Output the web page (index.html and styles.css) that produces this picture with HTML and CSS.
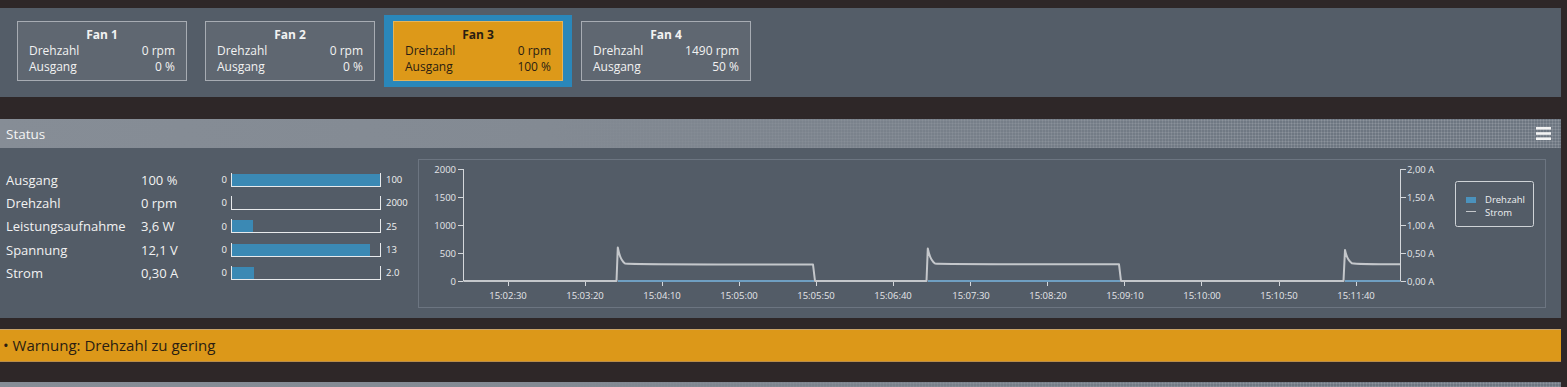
FILE: index.html
```html
<!DOCTYPE html>
<html lang="de">
<head>
    <meta charset="UTF-8">
    <title>Lüftersteuerung</title>
    <link rel="stylesheet" href="styles.css">
</head>
<body>
    <!-- Fan selection -->
    <div class="fan-bar">
        <div class="fan-card">
            <div class="fan-title">Fan 1</div>
            <div class="fan-row"><span>Drehzahl</span><span>0 rpm</span></div>
            <div class="fan-row"><span>Ausgang</span><span>0 %</span></div>
        </div>
        <div class="fan-card">
            <div class="fan-title">Fan 2</div>
            <div class="fan-row"><span>Drehzahl</span><span>0 rpm</span></div>
            <div class="fan-row"><span>Ausgang</span><span>0 %</span></div>
        </div>
        <div class="fan-card selected warn">
            <div class="fan-title">Fan 3</div>
            <div class="fan-row"><span>Drehzahl</span><span>0 rpm</span></div>
            <div class="fan-row"><span>Ausgang</span><span>100 %</span></div>
        </div>
        <div class="fan-card">
            <div class="fan-title">Fan 4</div>
            <div class="fan-row"><span>Drehzahl</span><span>1490 rpm</span></div>
            <div class="fan-row"><span>Ausgang</span><span>50 %</span></div>
        </div>
    </div>

    <!-- Status panel -->
    <div class="panel-head">
        <span>Status</span>
        <svg class="menu-icon" width="15" height="13" viewBox="0 0 15 13">
            <rect x="0" y="0" width="15" height="2.6" fill="#f4f4f4"/>
            <rect x="0" y="5.2" width="15" height="2.6" fill="#f4f4f4"/>
            <rect x="0" y="10.4" width="15" height="2.6" fill="#f4f4f4"/>
        </svg>
    </div>
    <div class="status-body">
        <div class="stats">
            <div class="stat-row">
                <span class="stat-label">Ausgang</span>
                <span class="stat-value">100 %</span>
                <span class="bar-min">0</span>
                <div class="bar"><div class="bar-fill" style="width: 100%"></div></div>
                <span class="bar-max">100</span>
            </div>
            <div class="stat-row">
                <span class="stat-label">Drehzahl</span>
                <span class="stat-value">0 rpm</span>
                <span class="bar-min">0</span>
                <div class="bar"><div class="bar-fill" style="width: 0%"></div></div>
                <span class="bar-max">2000</span>
            </div>
            <div class="stat-row">
                <span class="stat-label">Leistungsaufnahme</span>
                <span class="stat-value">3,6 W</span>
                <span class="bar-min">0</span>
                <div class="bar"><div class="bar-fill" style="width: 14.4%"></div></div>
                <span class="bar-max">25</span>
            </div>
            <div class="stat-row">
                <span class="stat-label">Spannung</span>
                <span class="stat-value">12,1 V</span>
                <span class="bar-min">0</span>
                <div class="bar"><div class="bar-fill" style="width: 93%"></div></div>
                <span class="bar-max">13</span>
            </div>
            <div class="stat-row">
                <span class="stat-label">Strom</span>
                <span class="stat-value">0,30 A</span>
                <span class="bar-min">0</span>
                <div class="bar"><div class="bar-fill" style="width: 15%"></div></div>
                <span class="bar-max">2.0</span>
            </div>
        </div>

        <div class="chart">
            <svg width="1126" height="147" viewBox="0 0 1126 147">
                <!-- axes -->
                <g stroke="#d4d7db" stroke-width="1" fill="none">
                    <path d="M44.5 9 V121.5"/>
                    <path d="M981.5 9 V121.5"/>
                    <path d="M39 9.5 H44 M39 37.5 H44 M39 65.5 H44 M39 93.5 H44 M39 121.5 H44"/>
                    <path d="M982 9.5 H987 M982 37.5 H987 M982 65.5 H987 M982 93.5 H987 M982 121.5 H987"/>
                    <path d="M89.5 121 V126 M166.5 121 V126 M243.5 121 V126 M320.5 121 V126 M397.5 121 V126 M474.5 121 V126 M551.5 121 V126 M628.5 121 V126 M705.5 121 V126 M782.5 121 V126 M860.5 121 V126 M937.5 121 V126"/>
                </g>
                <g class="axis-text" text-anchor="end">
                    <text x="37" y="12.5">2000</text>
                    <text x="37" y="40.5">1500</text>
                    <text x="37" y="68.5">1000</text>
                    <text x="37" y="96.5">500</text>
                    <text x="37" y="124.5">0</text>
                </g>
                <g class="axis-text">
                    <text x="988" y="12.5">2,00 A</text>
                    <text x="988" y="40.5">1,50 A</text>
                    <text x="988" y="68.5">1,00 A</text>
                    <text x="988" y="96.5">0,50 A</text>
                    <text x="988" y="124.5">0,00 A</text>
                </g>
                <g class="axis-text" text-anchor="middle">
                    <text x="89" y="138.5">15:02:30</text>
                    <text x="166" y="138.5">15:03:20</text>
                    <text x="243" y="138.5">15:04:10</text>
                    <text x="320" y="138.5">15:05:00</text>
                    <text x="397" y="138.5">15:05:50</text>
                    <text x="474" y="138.5">15:06:40</text>
                    <text x="552" y="138.5">15:07:30</text>
                    <text x="629" y="138.5">15:08:20</text>
                    <text x="706" y="138.5">15:09:10</text>
                    <text x="783" y="138.5">15:10:00</text>
                    <text x="860" y="138.5">15:10:50</text>
                    <text x="937" y="138.5">15:11:40</text>
                </g>
                <!-- Drehzahl series (only while the fan runs) -->
                <path d="M199 121 H395 M509 121 H701 M926 121 H981" stroke="#6f9fc2" stroke-width="2" fill="none"/>
                <!-- Strom series -->
                <path d="M45 121 H197.5 L198.8 87.5 Q201 100 206 103.5 Q210 104.5 394 104.5 L396 121 H507.5 L508.8 88.5 Q511 100 516 103.5 Q520 104.3 700 104.3 L702 121 H924.5 L926 90 Q928 100 933 103.3 Q937 104.3 981 104.3"
                      stroke="#c4c7cb" stroke-width="2" fill="none" stroke-linejoin="round"/>
                <!-- legend -->
                <rect x="1036.5" y="21.5" width="78" height="45" rx="2" fill="none" stroke="#cfd3d7"/>
                <rect x="1047" y="37" width="10" height="6" fill="#4b92bd"/>
                <path d="M1047 51.5 H1057" stroke="#c4c7cb" stroke-width="1"/>
                <g class="legend-text">
                    <text x="1066" y="42.5">Drehzahl</text>
                    <text x="1066" y="55.5">Strom</text>
                </g>
            </svg>
        </div>
    </div>

    <div class="warning">• Warnung: Drehzahl zu gering</div>

    <div class="panel-head bottom-head"></div>
</body>
</html>
```

FILE: styles.css
```css
/* Page base */
body, html {
    margin: 0;
    padding: 0;
}

body {
    background-color: #2e2728;
    font-family: "Open Sans", "Noto Sans", sans-serif;
    color: #f2f2f2;
    padding-top: 8px;
    overflow: hidden;
}

/* Fan selection bar */
.fan-bar {
    width: 1561px;
    height: 89px;
    box-sizing: border-box;
    background-color: #545d68;
    display: flex;
    gap: 18px;
    padding: 13px 17px 0 17px;
}

.fan-card {
    width: 170px;
    height: 60px;
    box-sizing: border-box;
    border: 1px solid #a7acb3;
    background-color: #5f6771;
    padding: 5px 11px 0 11px;
    font-size: 12px;
    line-height: 16px;
}

.fan-title {
    text-align: center;
    font-weight: bold;
}

.fan-row {
    display: flex;
    justify-content: space-between;
}

.fan-card.warn {
    background-color: #dd9919;
    border-color: #e6b458;
    color: #2a1d12;
}

.fan-card.selected {
    box-shadow: 0 0 0 6px #2a87ba, 3px 0 0 6px #2a87ba, -3px 0 0 6px #2a87ba;
}

/* Panel header strip */
.panel-head {
    width: 1561px;
    height: 29px;
    box-sizing: border-box;
    margin-top: 22px;
    padding: 0 10px 0 6px;
    display: flex;
    justify-content: space-between;
    align-items: center;
    font-size: 13.5px;
    color: #f4f4f4;
    background-color: #6d7681;
    background-image:
        linear-gradient(to right, #868d96 0%, #838a93 35%, rgba(128, 135, 145, 0) 85%),
        radial-gradient(circle, #8c939c 0.9px, transparent 1.1px);
    background-size: auto, 3px 3px;
}

.bottom-head {
    margin-top: 20px;
}

/* Status body */
.status-body {
    width: 1561px;
    height: 170px;
    box-sizing: border-box;
    background-color: #535c67;
    display: flex;
    padding-left: 6px;
}

.stats {
    width: 412px;
    padding-top: 20px;
}

.stat-row {
    display: flex;
    align-items: center;
    height: 23.3px;
}

.stat-label {
    width: 135px;
    font-size: 13px;
}

.stat-value {
    width: 80px;
    font-size: 13px;
}

.bar-min {
    width: 10px;
    box-sizing: border-box;
    padding-right: 4px;
    text-align: right;
    font-size: 9.5px;
}

.bar {
    width: 150px;
    height: 14px;
    box-sizing: border-box;
    border: 1px solid #e8eaec;
    border-top: none;
    padding-top: 1px;
}

.bar-fill {
    height: 12px;
    background-color: #3b89b4;
}

.bar-max {
    margin-left: 5px;
    font-size: 9.5px;
}

/* Chart */
.chart {
    width: 1128px;
    height: 149px;
    box-sizing: border-box;
    margin-top: 11px;
    border: 1px solid #6c7581;
}

.chart svg {
    display: block;
}

.axis-text {
    font-family: "Open Sans", sans-serif;
    font-size: 9.5px;
    fill: #e4e6e9;
}

.legend-text {
    font-family: "Open Sans", sans-serif;
    font-size: 9.5px;
    fill: #eef0f2;
}

/* Warning line */
.warning {
    width: 1561px;
    height: 33px;
    box-sizing: border-box;
    margin-top: 11px;
    padding-left: 3px;
    background-color: #dc9819;
    border-top: 1px solid #c9a36a;
    border-bottom: 1px solid #b98d4a;
    color: #2a1d12;
    font-size: 15px;
    line-height: 31px;
}
```
